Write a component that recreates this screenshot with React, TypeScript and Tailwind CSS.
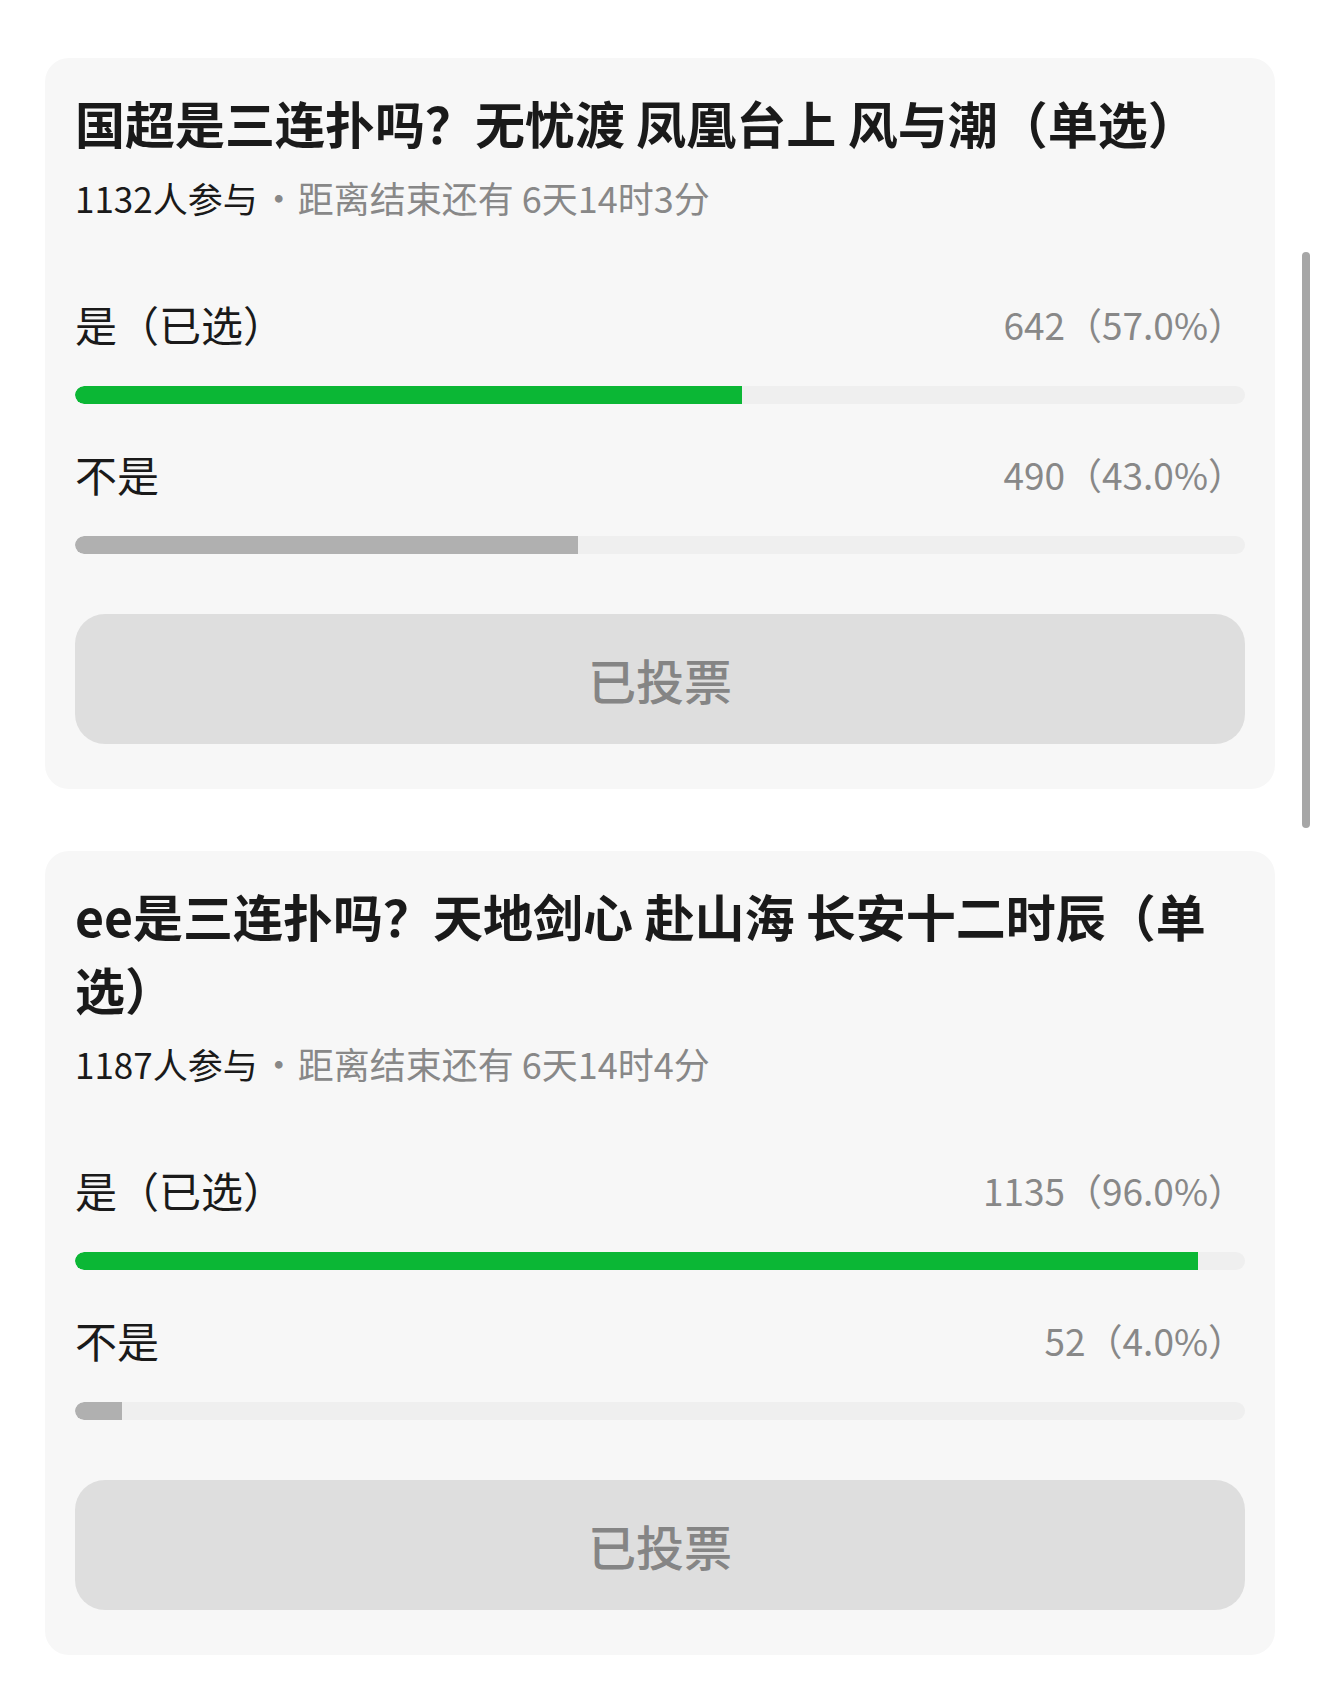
import React from "react";

type Option = {
  label: string;
  selected?: boolean;
  count: number;
  percent: number;
};

type Poll = {
  title: string;
  joined: number;
  remain: string;
  options: Option[];
};

const POLLS: Poll[] = [
  {
    title: "国超是三连扑吗？无忧渡 凤凰台上 风与潮（单选）",
    joined: 1132,
    remain: "距离结束还有 6天14时3分",
    options: [
      { label: "是", selected: true, count: 642, percent: 57 },
      { label: "不是", count: 490, percent: 43 },
    ],
  },
  {
    title: "ee是三连扑吗？天地剑心 赴山海 长安十二时辰（单选）",
    joined: 1187,
    remain: "距离结束还有 6天14时4分",
    options: [
      { label: "是", selected: true, count: 1135, percent: 96 },
      { label: "不是", count: 52, percent: 4 },
    ],
  },
];

function OptionRow({ option, first }: { option: Option; first: boolean }) {
  return (
    <div className={first ? "mt-[78px]" : "mt-[46px]"}>
      <div className="flex items-center justify-between leading-[48px]">
        <span className="text-[42px] text-[#1a1a1a]">
          {option.label}
          {option.selected && <span>（已选）</span>}
        </span>
        <span className="text-[37px] text-[#888888]">
          {option.count}（{option.percent.toFixed(1)}%）
        </span>
      </div>
      <div className="mt-[38px] h-[18px] rounded-full bg-[#efefef] overflow-hidden">
        <div
          className={
            option.selected
              ? "h-full rounded-l-full bg-[#0bb735]"
              : "h-full rounded-l-full bg-[#b0b0b0]"
          }
          style={{ width: `${option.percent}%` }}
        />
      </div>
    </div>
  );
}

function PollCard({ poll }: { poll: Poll }) {
  return (
    <div className="rounded-[24px] bg-[#f7f7f7] px-[30px] pt-[28px] pb-[45px]">
      {/* Title */}
      <h2 className="text-[50px] leading-[73px] font-bold text-[#1a1a1a]">
        {poll.title}
      </h2>

      {/* Meta */}
      <p className="mt-[14px] text-[36px] leading-[48px] text-[#888888]">
        <span className="text-[35px] text-[#1a1a1a]">{poll.joined}人参与</span>
        <span className="pl-[3px] pr-[1px]">·</span>
        {poll.remain}
      </p>

      {/* Options */}
      {poll.options.map((o, i) => (
        <OptionRow key={o.label} option={o} first={i === 0} />
      ))}

      {/* Button */}
      <div className="mt-[60px] flex h-[130px] items-center justify-center rounded-[30px] bg-[#dedede]">
        <span className="text-[48px] font-medium text-[#858585]">已投票</span>
      </div>
    </div>
  );
}

export default function App() {
  return (
    <div
      className="relative min-h-[1683px] w-[1320px] bg-white px-[45px] pt-[58px]"
      style={{ fontFamily: '"Noto Sans CJK SC", "Noto Sans", sans-serif' }}
    >
      <div className="flex flex-col gap-[62px]">
        {POLLS.map((p) => (
          <PollCard key={p.joined} poll={p} />
        ))}
      </div>

      {/* scrollbar overlay */}
      <div className="absolute left-[1302px] top-[252px] h-[576px] w-[8px] rounded-full bg-[#a6a6a6]" />
    </div>
  );
}
